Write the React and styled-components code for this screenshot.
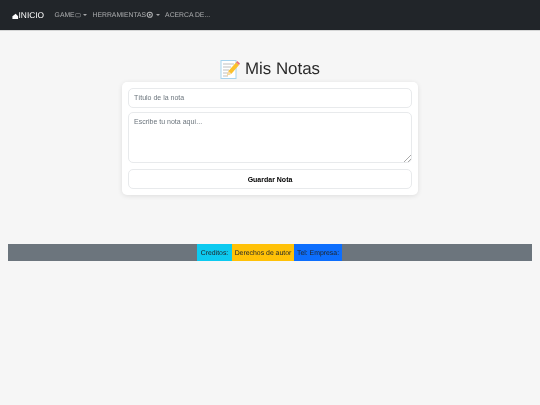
import React from 'react';
import styled, { createGlobalStyle } from 'styled-components';

const GlobalStyle = createGlobalStyle`
  html, body {
    margin: 0;
    padding: 0;
    min-height: 405px;
    background: #f6f6f6;
    font-family: "Liberation Sans", Arial, sans-serif;
    color: #212529;
    text-rendering: geometricPrecision;
  }
  * { box-sizing: border-box; }
  #root {
    filter: blur(0.3px);
    will-change: transform, opacity;
    transform: translateZ(0);
  }
`;

const Navbar = styled.nav`
  display: flex;
  align-items: center;
  height: 31px;
  padding: 0 0 0 12px;
  background: #212529;
  border-bottom: 1px solid #d5d6d6;
`;

const Brand = styled.a`
  display: flex;
  align-items: center;
  color: #fff;
  font-size: 8.4px;
  margin-right: 10.5px;
`;

const HomeGlyph = styled.svg`
  width: 6.5px;
  height: 6.5px;
  margin-top: 3px;
`;

const NavItem = styled.a`
  display: flex;
  align-items: center;
  color: rgba(255, 255, 255, 0.6);
  font-size: 6.8px;
  margin-right: 5.5px;
`;

const Caret = styled.span`
  width: 0;
  height: 0;
  margin-left: 2px;
  border-top: 2px solid rgba(255, 255, 255, 0.6);
  border-left: 2px solid transparent;
  border-right: 2px solid transparent;
`;

const Main = styled.main`
  display: flex;
  flex-direction: column;
  align-items: center;
  padding-top: 25px;
`;

const Title = styled.h1`
  display: flex;
  align-items: center;
  gap: 5px;
  height: 26px;
  margin: 0;
  font-size: 16.9px;
  font-weight: 400;
  color: #2b2b2b;
`;

const Card = styled.form`
  display: flex;
  flex-direction: column;
  gap: 4px;
  width: 296px;
  height: 113px;
  padding: 6px;
  background: #fff;
  border-radius: 5px;
  box-shadow: 0 1px 5px rgba(0, 0, 0, 0.1);
`;

const TitleInput = styled.input`
  height: 20px;
  padding: 0 5px 1px;
  border: 1px solid #e8eaec;
  border-radius: 5px;
  background: #fff;
  font: 7px "Liberation Sans", Arial, sans-serif;
  outline: none;
  &::placeholder { color: #6c757d; }
`;

const NoteArea = styled.textarea`
  height: 51px;
  padding: 5px 5px;
  border: 1px solid #e8eaec;
  border-radius: 5px;
  background: #fff;
  font: 7px "Liberation Sans", Arial, sans-serif;
  outline: none;
  &::placeholder { color: #6c757d; }
  &::-webkit-resizer {
    background: linear-gradient(135deg, transparent 74%, #aaa 74%, #aaa 79%, transparent 79%, transparent 87%, #aaa 87%, #aaa 92%, transparent 92%);
  }
`;

const SaveButton = styled.button`
  height: 20px;
  margin-top: 2px;
  border: 1px solid #e8eaec;
  border-radius: 5px;
  background: #fff;
  color: #000;
  font: 700 7px "Liberation Sans", Arial, sans-serif;
`;

const Footer = styled.footer`
  display: flex;
  justify-content: center;
  height: 17px;
  margin: 49px 8px 0;
  padding-right: 1px;
  background: #6c757d;
`;

const FooterItem = styled.div`
  display: flex;
  align-items: center;
  justify-content: center;
  width: ${p => p.$width}px;
  padding-top: 1px;
  background: ${p => p.$bg};
  color: #212529;
  font-size: 6.9px;
`;

const HomeIcon = () => (
  <HomeGlyph viewBox="0 0 16 16" fill="#fff">
    <path d="M9 2 L15 8 V15 H1 V8 Z" />
  </HomeGlyph>
);

const GameIcon = () => (
  <svg width="6" height="6" viewBox="0 0 16 16" fill="none" stroke="rgba(255,255,255,.5)" strokeWidth="1.6" style={{ marginLeft: 0.5 }}>
    <rect x="1" y="4" width="14" height="9" rx="3" />
  </svg>
);

const GearIcon = () => (
  <svg width="7.5" height="7.5" viewBox="0 0 16 16" fill="none" stroke="rgba(255,255,255,.65)" strokeWidth="2.2">
    <circle cx="8" cy="8" r="5.5" />
    <circle cx="8" cy="8" r="1" />
  </svg>
);

const MemoIcon = () => (
  <svg width="20" height="20" viewBox="0 0 20 20">
    <rect x="1" y="1.5" width="15" height="18" fill="#fff" stroke="#a6d3ee" strokeWidth="1" />
    <path d="M3 5h11M3 8h8M3 11h6M3 14h5M3 17h5" stroke="#b8b8b8" strokeWidth="0.9" />
    <path d="M7 16.5 L8.5 12 L16 3.5 L19 6 L11.5 14.8 Z" fill="#fbc02d" />
    <path d="M7 16.5 L8.5 12 L11.5 14.8 Z" fill="#f6dcb0" />
    <path d="M16 3.5 L17.2 2 L20 4.6 L19 6 Z" fill="#e8727b" />
  </svg>
);

export default function App() {
  return (
    <>
      <GlobalStyle />
      <Navbar>
        <Brand><HomeIcon />INICIO</Brand>
        <NavItem>GAME<GameIcon /><Caret /></NavItem>
        <NavItem>HERRAMIENTAS<GearIcon /><Caret /></NavItem>
        <NavItem>ACERCA DE...</NavItem>
      </Navbar>
      <Main>
        <Title><MemoIcon />Mis Notas</Title>
        <Card onSubmit={e => e.preventDefault()}>
          <TitleInput placeholder="Título de la nota" />
          <NoteArea placeholder="Escribe tu nota aquí..." />
          <SaveButton type="submit">Guardar Nota</SaveButton>
        </Card>
      </Main>
      <Footer>
        <FooterItem $bg="#0dcaf0" $width={35}>Creditos:</FooterItem>
        <FooterItem $bg="#ffc107" $width={62}>Derechos de autor</FooterItem>
        <FooterItem $bg="#0d6efd" $width={48}>Tel: Empresa:</FooterItem>
      </Footer>
    </>
  );
}
